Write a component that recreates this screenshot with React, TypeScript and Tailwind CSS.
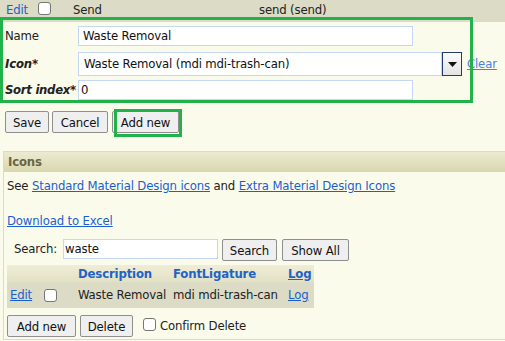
import React from 'react';

const Checkbox = () => (
    <span className="inline-block w-[13px] h-[13px] rounded-[3px] border border-[#767676] bg-white" />
);

const Button = ({ label, className = '' }: { label: string; className?: string }) => (
    <button className={`h-[22px] px-[6px] rounded-[2px] border border-[#8f8f8f] bg-[#efefef] text-[13px] leading-none text-[#111] ${className}`}>
        {label}
    </button>
);

const Link = ({ children, className = '' }: { children: React.ReactNode; className?: string }) => (
    <a href="#" className={`text-[#1a5fcf] underline ${className}`}>
        {children}
    </a>
);

export default function App() {
    return (
        <div className="relative w-[505px] h-[341px] overflow-hidden bg-[#fbfbeb] text-[13px] leading-[16px] tracking-[-0.15px] text-[#222] font-[DejaVu_Sans_Condensed,DejaVu_Sans,sans-serif]">
            {/* last row of the list above */}
            <div className="h-[22px] bg-[#dcdbc5] flex items-start pt-[2px]">
                <div className="w-[32px] pl-[6px]">
                    <a href="#" className="text-[#1a5fcf]">Edit</a>
                </div>
                <div className="w-[41px] pl-[6px]"><Checkbox /></div>
                <div className="w-[186px]">Send</div>
                <div>send (send)</div>
            </div>

            {/* edit form */}
            <div className="pt-[4px]">
                <div className="flex items-center h-[20px]">
                    <div className="w-[78px] pl-[5px]">Name</div>
                    <div className="w-[335px] h-[20px] border border-[#c4d8f5] bg-white pl-[4px] flex items-center text-[#111]">Waste Removal</div>
                </div>
                <div className="flex items-center h-[24px] mt-[6px]">
                    <div className="w-[78px] pl-[5px] font-bold italic">Icon*</div>
                    <div className="w-[364px] h-[24px] border border-[#c4d8f5] bg-white pl-[5px] flex items-center text-[#111]">Waste Removal (mdi mdi-trash-can)</div>
                    <div className="w-[20px] h-[24px] border border-[#1e3f6c] bg-gradient-to-b from-[#fbfbfb] to-[#e4e4e4] flex items-center justify-center">
                        <svg width="9" height="5" viewBox="0 0 9 5"><path d="M0 0h9L4.5 5z" fill="#111" /></svg>
                    </div>
                    <a href="#" className="ml-[5px] text-[#4f7fdc] underline">Clear</a>
                </div>
                <div className="flex items-center h-[20px] mt-[4px]">
                    <div className="w-[78px] pl-[5px] font-bold italic whitespace-nowrap tracking-[-0.3px]">Sort index*</div>
                    <div className="w-[335px] h-[20px] border border-[#c4d8f5] bg-white pl-[2px] flex items-center text-[#111]">0</div>
                </div>
            </div>

            <div className="flex items-center gap-[3px] pl-[5px] mt-[11px]">
                <Button label="Save" className="w-[44px]" />
                <Button label="Cancel" className="w-[56px]" />
                <Button label="Add new" className="w-[67px] ml-[1px]" />
            </div>

            {/* Icons panel */}
            <div className="ml-[3px] mt-[18px] w-[520px] h-[189px] border border-[#dedcbf]">
                <div className="h-[20px] pl-[4px] flex items-center bg-gradient-to-b from-[#ecebd0] to-[#d9d7ae] font-bold text-[#6a6540]">
                    Icons
                </div>
                <div className="px-[3px] pt-[6px]">
                    <div>
                        See <Link>Standard Material Design icons</Link> and <Link>Extra Material Design Icons</Link>
                    </div>
                    <div className="mt-[19px]">
                        <Link>Download to Excel</Link>
                    </div>
                    <div className="flex items-center mt-[7px]">
                        <div className="w-[56px] pl-[7px]">Search:</div>
                        <div className="w-[155px] h-[20px] border border-[#c4d8f5] bg-white pl-[1px] flex items-center text-[#111]">waste</div>
                        <Button label="Search" className="w-[55px] ml-[4px] mt-[3px]" />
                        <Button label="Show All" className="w-[67px] ml-[5px] mt-[3px]" />
                    </div>

                    <div className="mt-[4px] w-[307px]">
                        <div className="grid grid-cols-[34px_35px_95px_115px_28px] h-[17px] items-center bg-gradient-to-b from-[#efedd6] to-[#e3e1c3] font-bold text-[#1f62c9]">
                            <div />
                            <div />
                            <div className="pl-[2px]">Description</div>
                            <div className="pl-[2px]">FontLigature</div>
                            <div className="pl-[2px] underline">Log</div>
                        </div>
                        <div className="grid grid-cols-[34px_35px_95px_115px_28px] h-[26px] items-center bg-[#dcdbc6] whitespace-nowrap">
                            <div className="pl-[3px]"><Link>Edit</Link></div>
                            <div className="pl-[3px] flex"><Checkbox /></div>
                            <div className="pl-[2px]">Waste Removal</div>
                            <div className="pl-[2px]">mdi mdi-trash-can</div>
                            <div className="pl-[2px]"><Link>Log</Link></div>
                        </div>
                    </div>

                    <div className="flex items-center mt-[7px]">
                        <Button label="Add new" className="w-[69px]" />
                        <Button label="Delete" className="w-[53px] ml-[4px]" />
                        <span className="ml-[10px] mb-[3px] flex"><Checkbox /></span>
                        <span className="ml-[4px]">Confirm Delete</span>
                    </div>
                </div>
            </div>

            {/* highlight annotations */}
            <div className="absolute left-0 top-[17px] w-[473px] h-[86px] border-[3px] border-[#22b24c] pointer-events-none" />
            <div className="absolute left-[114px] top-[109px] w-[68px] h-[28px] border-[3px] border-[#22b24c] pointer-events-none" />
        </div>
    );
}
